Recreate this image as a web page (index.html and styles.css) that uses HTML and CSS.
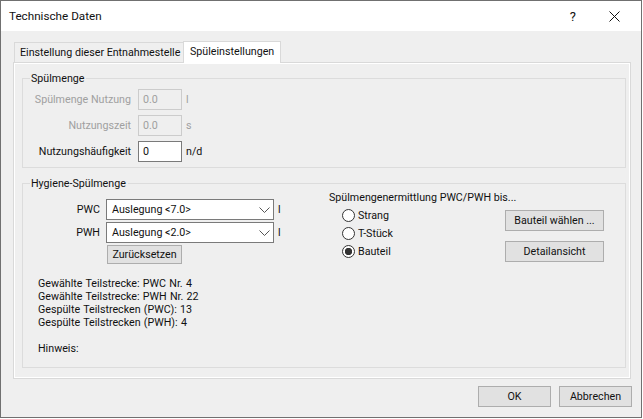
FILE: index.html
```html
<!DOCTYPE html>
<html lang="de">
<head>
  <meta charset="UTF-8" />
  <title>Technische Daten</title>
  <link rel="stylesheet" href="styles.css" />
</head>
<body>
  <div class="dialog">
    <header class="titlebar">
      <span class="title">Technische Daten</span>
      <span class="help">?</span>
      <svg class="close" width="11" height="11" viewBox="0 0 11 11"><path d="M.5.5l10 10M10.5.5l-10 10" stroke="#111" fill="none"/></svg>
    </header>

    <div class="tabs">
      <div class="tab">Einstellung dieser Entnahmestelle</div>
      <div class="tab active">Spüleinstellungen</div>
    </div>

    <main class="panel">
      <fieldset class="group group-menge">
        <legend>Spülmenge</legend>
        <div class="row disabled">
          <label>Spülmenge Nutzung</label>
          <span class="field">0.0</span>
          <span class="unit">l</span>
        </div>
        <div class="row disabled">
          <label>Nutzungszeit</label>
          <span class="field">0.0</span>
          <span class="unit">s</span>
        </div>
        <div class="row">
          <label>Nutzungshäufigkeit</label>
          <span class="field">0</span>
          <span class="unit">n/d</span>
        </div>
      </fieldset>

      <fieldset class="group group-hygiene">
        <legend>Hygiene-Spülmenge</legend>
        <div class="hygiene-left">
          <div class="select-row">
            <label>PWC</label>
            <div class="select">Auslegung &lt;7.0&gt;
              <svg width="11" height="6" viewBox="0 0 11 6"><path d="M.5.5l5 5 5-5" stroke="#555" fill="none"/></svg>
            </div>
            <span class="unit">l</span>
          </div>
          <div class="select-row">
            <label>PWH</label>
            <div class="select">Auslegung &lt;2.0&gt;
              <svg width="11" height="6" viewBox="0 0 11 6"><path d="M.5.5l5 5 5-5" stroke="#555" fill="none"/></svg>
            </div>
            <span class="unit">l</span>
          </div>
          <button class="btn btn-reset">Zurücksetzen</button>
          <div class="info">
            <p>Gewählte Teilstrecke: PWC Nr. 4</p>
            <p>Gewählte Teilstrecke: PWH Nr. 22</p>
            <p>Gespülte Teilstrecken (PWC): 13</p>
            <p>Gespülte Teilstrecken (PWH): 4</p>
            <p class="hint">Hinweis:</p>
          </div>
        </div>
        <div class="hygiene-right">
          <div class="heading">Spülmengenermittlung PWC/PWH bis...</div>
          <div class="options">
            <div class="radios">
              <div class="radio"><span class="dot"></span>Strang</div>
              <div class="radio"><span class="dot"></span>T-Stück</div>
              <div class="radio checked"><span class="dot"></span>Bauteil</div>
            </div>
            <div class="side-buttons">
              <button class="btn">Bauteil wählen ...</button>
              <button class="btn">Detailansicht</button>
            </div>
          </div>
        </div>
      </fieldset>
    </main>

    <footer class="actions">
      <button class="btn btn-action">OK</button>
      <button class="btn btn-action">Abbrechen</button>
    </footer>
  </div>
</body>
</html>
```

FILE: styles.css
```css
/* dialog */
body {
  margin: 0;
  background: #fff;
  font-family: Roboto, "Noto Sans", sans-serif;
  font-size: 10.7px;
  color: #111;
}

.dialog {
  box-sizing: border-box;
  width: 642px;
  height: 418px;
  border: 1px solid #707070;
  background: #efefef;
  overflow: hidden;
}

/* title bar */
.titlebar {
  display: flex;
  align-items: center;
  height: 30px;
  padding: 0 21px 0 8px;
  background: #fff;
}

.title {
  flex: 1;
  font-size: 11.7px;
}

.help {
  margin-right: 33px;
  font-size: 13px;
}

/* tabs */
.tabs {
  display: flex;
  align-items: flex-end;
  height: 31px;
  padding-left: 13px;
}

.tab {
  box-sizing: border-box;
  height: 20px;
  padding: 0 5px;
  line-height: 19px;
  border: 1px solid #d9d9d9;
  border-bottom: 0;
  width: 170px;
  white-space: nowrap;
}

.tab.active {
  width: 98px;
  height: 22px;
  margin-bottom: -1px;
  margin-left: -1px;
  padding: 0 6px;
  line-height: 19px;
  background: #fff;
  position: relative;
  z-index: 1;
}

.panel {
  box-sizing: border-box;
  width: 618px;
  height: 317px;
  margin-left: 12px;
  padding: 7px 3px 0 8px;
  border: 1px solid #d9d9d9;
  box-shadow: inset 0 0 0 1px #fff;
  display: flex;
  flex-direction: column;
  gap: 7px;
}

/* group boxes */
.group {
  box-sizing: border-box;
  margin: 0;
  width: 604px;
  padding: 0;
  border: 1px solid #dcdcdc;
}

.group legend {
  margin-left: 7px;
  padding: 2px 2px 0 1px;
  line-height: 14px;
}

.group-menge {
  height: 98px;
  padding: 3px 0 0 0;
}

.group-hygiene {
  height: 193px;
  display: grid;
  grid-template-columns: 306px 1fr;
}

/* form rows */
.row {
  display: flex;
  align-items: center;
  height: 21px;
  margin-bottom: 5px;
}

.row label {
  width: 108px;
  margin-right: 7px;
  text-align: right;
  white-space: nowrap;
}

.field {
  box-sizing: border-box;
  width: 44px;
  height: 21px;
  margin-right: 4px;
  padding-left: 4px;
  line-height: 20px;
  background: #fff;
  border: 1px solid #7a7a7a;
}

.row.disabled {
  color: #a0a0a0;
}

.row.disabled .field {
  background: #efefef;
  border-color: #ccc;
}

/* left column */
.hygiene-left {
  padding-top: 8px;
}

.select-row {
  display: flex;
  align-items: center;
  height: 21px;
  margin-bottom: 2px;
}

.select-row label {
  width: 77px;
  margin-right: 6px;
  text-align: right;
}

.select {
  box-sizing: border-box;
  display: flex;
  align-items: center;
  justify-content: space-between;
  width: 168px;
  height: 21px;
  margin-right: 4px;
  padding: 0 3px 0 5px;
  background: #fff;
  border: 1px solid #7a7a7a;
}

.btn {
  box-sizing: border-box;
  padding: 0;
  font: inherit;
  color: inherit;
  background: #e1e1e1;
  border: 1px solid #adadad;
}

.btn-reset {
  display: block;
  width: 75px;
  height: 19px;
  margin-left: 84px;
}

.info {
  margin: 13px 0 0 15px;
  word-spacing: .6px;
}

.info p {
  margin: 0;
  line-height: 13px;
}

.info .hint {
  margin-top: 13px;
}

/* right column */
.heading {
  line-height: 14px;
}

.options {
  display: flex;
  justify-content: space-between;
  padding: 1px 21px 0 13px;
}

.radio {
  display: flex;
  align-items: center;
  gap: 3px;
  height: 18px;
}

.dot {
  box-sizing: border-box;
  width: 13px;
  height: 13px;
  background: #fff;
  border: 1px solid #333;
  border-radius: 50%;
}

.radio.checked .dot {
  background: radial-gradient(circle, #333 0 3.4px, #fff 4px);
}

.side-buttons {
  display: flex;
  flex-direction: column;
  gap: 10px;
  padding-top: 4px;
}

.side-buttons .btn {
  width: 99px;
  height: 21px;
}

/* footer */
.actions {
  display: flex;
  justify-content: flex-end;
  gap: 8px;
  padding: 7px 9px 0 0;
}

.btn-action {
  width: 73px;
  height: 21px;
}
```
